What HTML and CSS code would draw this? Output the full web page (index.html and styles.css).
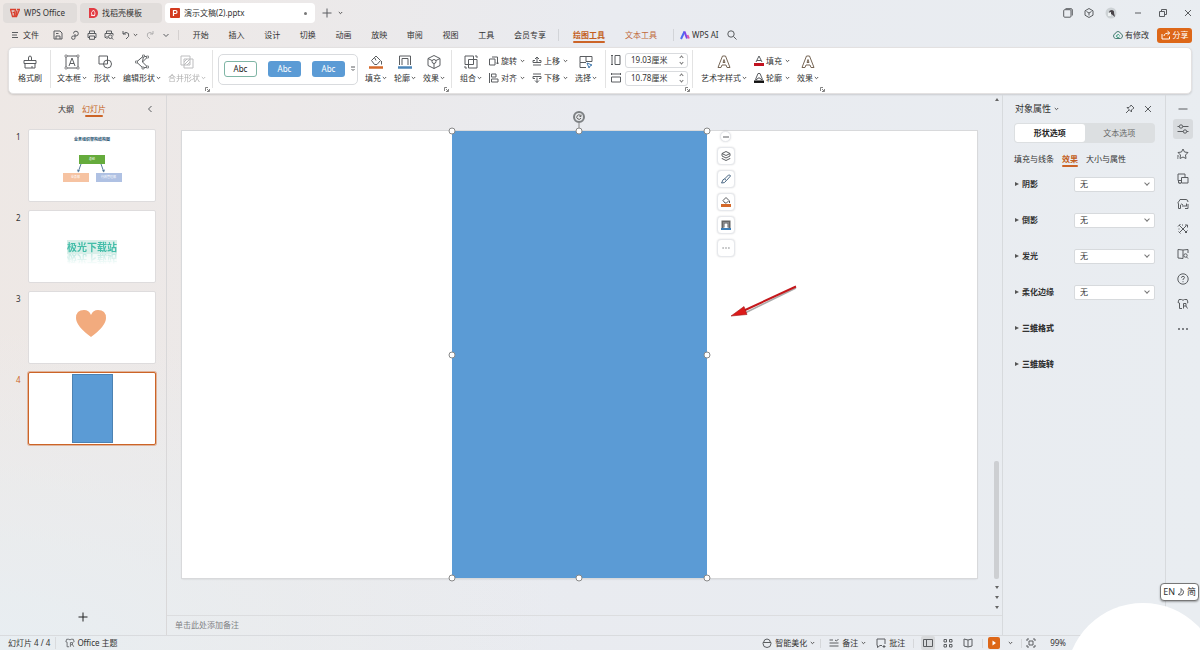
FILE: index.html
```html
<!DOCTYPE html>
<html lang="zh-CN">
<head>
<meta charset="utf-8">
<title>演示文稿(2).pptx - WPS Office</title>
<link rel="stylesheet" href="styles.css">
</head>
<body>
<svg class="defs" aria-hidden="true">
  <symbol id="caret" viewBox="0 0 5 4"><path d="M.8 1l1.700 1.700L4.200 1" fill="none" stroke="currentColor"/></symbol>
  <symbol id="launch" viewBox="0 0 5 5"><path d="M.5 4V.5H3M2 2l2 2M4.500 2v2.500H2" fill="none" stroke="currentColor" stroke-width=".8"/></symbol>
  <symbol id="shirt" viewBox="0 0 12 12"><path d="M5 10.500H2.500V5L1 4.500 2 1.500h2.500q1.500 1.500 3 0H10L11 4.500l-1 .5M6.500 5.500h2.500v2.500H6.500zM6.500 8v2.500M9 8l1.500 2.500"/></symbol>
</svg>

<header class="titlebar">
  <nav class="doc-tabs">
    <button class="doc-tab"><svg class="i10" viewBox="0 0 10 10"><path d="M.5 1.500h5L4 8.500H2.500zM2.500 4.500h3M5.500 8.500L7 2.500M4 8.500h2.500l3-7H7" fill="none" stroke="#d9402f" stroke-width="1.300"/></svg>WPS Office</button>
    <button class="doc-tab tab-mid"><svg class="i10" viewBox="0 0 10 10"><path d="M1 0h5q4 1 4 5t-4 5H1z" fill="#e23c44" stroke="none"/><path d="M5.500 2q-3 3-2 4.500 2 2 3.500 0Q7.500 5 5.500 2zM3 7.500h4" stroke="#fff" fill="none" stroke-width=".8"/></svg>找稻壳模板</button>
    <button class="doc-tab tab-open"><svg class="i10" viewBox="0 0 10 10"><rect width="10" height="10" rx="1" fill="#d33b20" stroke="none"/><path d="M3.500 8V2.500h2q1.500 0 1.500 1.500T5.500 5.500h-2" stroke="#fff" fill="none" stroke-width="1.200"/></svg>演示文稿(2).pptx<i class="dot"></i></button>
  </nav>
  <button class="plain" aria-label="新建"><svg class="i10" viewBox="0 0 10 10"><path d="M5 .5v9M.5 5h9"/></svg></button>
  <button class="plain" aria-label="更多"><svg class="caret"><use href="#caret"/></svg></button>
  <div class="window-tools">
    <button class="plain" aria-label="窗口"><svg class="i10" viewBox="0 0 10 10"><rect x=".7" y="1.700" width="7.300" height="7.500" rx="1"/><path d="M2.500.7H8q1.300 0 1.300 1.300v5.500"/></svg></button>
    <button class="plain" aria-label="应用"><svg class="i10" viewBox="0 0 10 10"><path d="M5 .5l4 2.300v4.400L5 9.500 1 7.200V2.800zM2.500 3.500L5 5l2.500-1.500M5 5v2.500"/></svg></button>
    <button class="plain" aria-label="账户"><svg class="i12" viewBox="0 0 12 12"><circle cx="6" cy="6" r="5.500" fill="#cdd2d5" stroke="none"/><path d="M4 6q0-3 3-3 2.500.5 2 3L10 10 7 7.500" fill="#484348" stroke="none"/><path d="M3 6l3-1v4H3z" fill="#eef2f2" stroke="none"/></svg></button>
    <button class="plain win" aria-label="最小化"><svg class="i8" viewBox="0 0 8 8"><path d="M1 4h6"/></svg></button>
    <button class="plain win" aria-label="还原"><svg class="i8" viewBox="0 0 8 8"><path d="M.5 2.500h5v5h-5zM2.500 2.500v-2h5v5h-2"/></svg></button>
    <button class="plain win" aria-label="关闭"><svg class="i8" viewBox="0 0 8 8"><path d="M1 1l6 6M7 1L1 7"/></svg></button>
  </div>
</header>

<div class="menubar">
  <button class="plain file"><svg class="i8" viewBox="0 0 8 8"><path d="M1 1.500h6M1 4h5M1 6.500h6"/></svg>文件</button>
  <div class="quick">
    <button class="plain" aria-label="保存"><svg class="i10" viewBox="0 0 10 10"><path d="M1 1h6l2 2v6H1zM3 9V6h4v3M3 3.500h2.500"/></svg></button>
    <button class="plain" aria-label="输出"><svg class="i10" viewBox="0 0 10 10"><path d="M3.500 3.500A2.400 2.400 0 1 1 6 6H3.500A1.700 1.700 0 1 0 5 7.500V4"/></svg></button>
    <button class="plain" aria-label="打印"><svg class="i10" viewBox="0 0 10 10"><path d="M2.500 3.500V1h5v2.500M2.500 7.500H1v-4h8v4H7.500M2.500 6h5v3.300h-5z"/></svg></button>
    <button class="plain" aria-label="打印预览"><svg class="i10" viewBox="0 0 10 10"><path d="M2.500 3.500V1h5v2.500M2 7.500H1v-4h8v2M3 9V6"/><circle cx="6.300" cy="6.700" r="1.800"/><path d="M7.700 8l1.500 1.500"/></svg></button>
    <button class="plain" aria-label="撤销"><svg class="i10" viewBox="0 0 10 10"><path d="M2 1v3h3M2 4q3-3 5.500-.5Q9 6.500 5 9"/></svg><svg class="caret"><use href="#caret"/></svg></button>
    <button class="plain off" aria-label="重做"><svg class="i10" viewBox="0 0 10 10"><path d="M8 1v3H5M8 4Q5 1 2.500 3.500 1 6.500 5 9"/></svg></button>
    <button class="plain" aria-label="自定义"><svg class="i8" viewBox="0 0 8 8"><path d="M1.500 3L4 5.500 6.500 3"/></svg></button>
  </div>
  <nav class="menu-tabs">
    <button>开始</button><button>插入</button><button>设计</button><button>切换</button><button>动画</button><button>放映</button><button>审阅</button><button>视图</button>
    <button>工具</button>
  </nav>
  <button class="plain member">会员专享</button>
  <nav class="context-tabs">
    <button class="plain current">绘图工具</button>
    <button class="plain">文本工具</button>
  </nav>
  <button class="plain ai"><svg class="i10" viewBox="0 0 10 10"><path d="M1 9l3.500-7.500" stroke="#4a6cf0" stroke-width="2"/><path d="M4.500 1.500L7 8.500" stroke="#7a45e8" stroke-width="2"/><path d="M7.500 5L9 8.500" stroke="#e052a8" stroke-width="1.800"/></svg>WPS AI</button>
  <button class="plain" aria-label="搜索"><svg class="i10" viewBox="0 0 10 10"><circle cx="4" cy="4" r="3.200"/><path d="M6.500 6.500l3 3"/></svg></button>
  <div class="menu-end">
    <button class="plain changes"><svg class="i10" viewBox="0 0 10 10"><path d="M2.500 8.500Q.5 8 .5 6t2-2.500Q3 1.500 5 1.500t2.500 2q2 .5 2 2.500t-2 2.500z" stroke="#4b7d74"/><path d="M6.500 5.500a1.500 1.500 0 1 0 0 1.200" stroke="#2b9a76"/></svg>有修改</button>
    <button class="share"><svg class="i10" viewBox="0 0 10 10"><path d="M1 4v5h7.500V6.500M3 6q0-3 5.500-3M6.500 1l2.200 2-2.200 2"/></svg>分享</button>
  </div>
</div>

<section class="ribbon" aria-label="绘图工具">
  <div class="group">
    <button class="tool"><svg class="i16" viewBox="0 0 16 16"><path d="M2 6.500h12v3H2zM3 9.500V14h10V9.500M6.500 6.500V4q0-2 1.500-2t1.500 2v2.500M10 14v-2"/></svg><span>格式刷</span></button>
  </div>
  <div class="group">
    <button class="tool"><svg class="i16" viewBox="0 0 16 16"><path d="M2 2h12v12H2zM5 12l3-8 3 8M6 9.500h4"/><path d="M1 1h2v2H1zM13 1h2v2h-2zM1 13h2v2H1zM13 13h2v2h-2z" fill="#fff" stroke-width=".6"/></svg><span>文本框<svg class="caret"><use href="#caret"/></svg></span></button>
    <button class="tool"><svg class="i16" viewBox="0 0 16 16"><path d="M6.500 10H2V2h8.500v4"/><circle cx="10.500" cy="10" r="4"/><path d="M10.500 6v4h-4"/></svg><span>形状<svg class="caret"><use href="#caret"/></svg></span></button>
    <button class="tool"><svg class="i16" viewBox="0 0 16 16"><path d="M9.500 2L2.500 8l6.500 6M13.500 3L8.500 8l5 5M9.500 2l-1 6M13.500 3l-4-1M9 14l4.500-1"/><path d="M1.500 7h2v2h-2zM8.500 1h2v2h-2zM12.500 2h2v2h-2zM12.500 12h2v2h-2zM8 13h2v2H8z" fill="#fff" stroke-width=".7"/></svg><span>编辑形状<svg class="caret"><use href="#caret"/></svg></span></button>
    <button class="tool off" disabled><svg class="i16" viewBox="0 0 16 16"><path d="M2 2h9v9H2zM5 5h9v9H5zM5 8l3-3M5 11l6-6M8 11l3-3"/></svg><span>合并形状<svg class="caret"><use href="#caret"/></svg></span></button>
    <svg class="launch"><use href="#launch"/></svg>
  </div>
  <div class="group styles-group">
    <div class="gallery">
      <button class="swatch swatch-line">Abc</button><button class="swatch">Abc</button><button class="swatch">Abc</button>
      <button class="plain gallery-more" aria-label="更多样式"><svg class="i6" viewBox="0 0 6 6"><path d="M1 1h4M1.500 3L3 4.500 4.500 3"/></svg></button>
    </div>
    <button class="tool"><svg class="i16" viewBox="0 0 16 16"><path d="M3.500 6.500L8 2l4.500 4.500-3.500 4H6.500zM6.500 3.500l1.500 3M13.500 7v3.500"/><path d="M1 13.500h14" stroke="#d4692a" stroke-width="2.500"/></svg><span>填充<svg class="caret"><use href="#caret"/></svg></span></button>
    <button class="tool"><svg class="i16" viewBox="0 0 16 16"><path d="M2.500 11V2h11v9M5 11V4.500h6V11"/><path d="M1 13.500h14" stroke="#4d86b8" stroke-width="2.500"/></svg><span>轮廓<svg class="caret"><use href="#caret"/></svg></span></button>
    <button class="tool"><svg class="i16" viewBox="0 0 16 16"><path d="M8 1.500l6 3v7l-6 3-6-3v-7zM2 4.500l4 2M14 4.500l-4 2M8 9.500v5"/><circle cx="8" cy="7.500" r="2"/></svg><span>效果<svg class="caret"><use href="#caret"/></svg></span></button>
    <svg class="launch"><use href="#launch"/></svg>
  </div>
  <div class="group arrange-group">
    <button class="tool"><svg class="i16" viewBox="0 0 16 16"><path d="M2 2h8.500v8.500H2zM5.500 5.500H14V14H5.500zM12 2h2v2M2 12v2h2"/></svg><span>组合<svg class="caret"><use href="#caret"/></svg></span></button>
    <div class="stack">
      <button class="line-tool"><svg class="i10" viewBox="0 0 10 10"><path d="M.5 3h5.500v6H.5zM3 1h5.500v7M7 6.500L8.500 8 10 6.500"/></svg>旋转<svg class="caret"><use href="#caret"/></svg></button>
      <button class="line-tool"><svg class="i10" viewBox="0 0 10 10"><path d="M.5 0v10M2.500 1H7v3H2.500zM2.500 6H9v3H2.500z"/></svg>对齐<svg class="caret"><use href="#caret"/></svg></button>
    </div>
    <div class="stack">
      <button class="line-tool"><svg class="i10" viewBox="0 0 10 10"><path d="M5 6V1M3 3l2-2 2 2M3 4.500H1v2h8v-2H7M1 9h8"/></svg>上移<svg class="caret"><use href="#caret"/></svg></button>
      <button class="line-tool"><svg class="i10" viewBox="0 0 10 10"><path d="M1 1h8M3 5.500H1v-2h8v2H7M5 4.500v5M3 7.500l2 2 2-2"/></svg>下移<svg class="caret"><use href="#caret"/></svg></button>
    </div>
    <button class="tool"><svg class="i16" viewBox="0 0 16 16"><path d="M8 13.500H2v-5h6M2 8.500v-6h12v5H8v-5"/><path d="M9 9l5 2-2 1-1 2z" stroke="#447bb0"/></svg><span>选择<svg class="caret"><use href="#caret"/></svg></span></button>
  </div>
  <div class="group size-group">
    <div class="sizes">
      <label class="size"><svg class="i10" viewBox="0 0 10 10"><path d="M1 .5v9M0 .5h2M0 9.500h2M4 .5h5v9H4z"/></svg><span class="field"><input value="19.03厘米" aria-label="高度"><i class="step"></i></span></label>
      <label class="size"><svg class="i10" viewBox="0 0 10 10"><path d="M.5 1h9M.5 0v2M9.500 0v2M.5 4h9v5h-9z"/></svg><span class="field"><input value="10.78厘米" aria-label="宽度"><i class="step"></i></span></label>
    </div>
    <svg class="launch"><use href="#launch"/></svg>
  </div>
  <div class="group group-last">
    <button class="tool"><svg class="i16" viewBox="0 0 16 16"><path d="M2 13.500L6.500 2h3L14 13.500h-3L10 11H6l-1 2.500zM7 8.500l1-3 1 3z" stroke="#766554"/></svg><span>艺术字样式<svg class="caret"><use href="#caret"/></svg></span></button>
    <div class="stack">
      <button class="line-tool"><svg class="i10" viewBox="0 0 10 10"><path d="M2 6l3-6 3 6M3 4.500h4"/><path d="M0 8.500h10" stroke="#c1121f" stroke-width="3"/></svg>填充<svg class="caret"><use href="#caret"/></svg></button>
      <button class="line-tool"><svg class="i10" viewBox="0 0 10 10"><path d="M1.500 6.500L4 .5h2l2.500 6H7L6 5H4L3 6.500z"/><path d="M0 8.700h10" stroke="#111" stroke-width="2.500"/></svg>轮廓<svg class="caret"><use href="#caret"/></svg></button>
    </div>
    <button class="tool"><svg class="i16" viewBox="0 0 16 16"><path d="M2 13.500L6.500 2h3L14 13.500h-3L10 11H6l-1 2.500zM7 8.500l1-3 1 3z" stroke="#766554"/></svg><span>效果<svg class="caret"><use href="#caret"/></svg></span></button>
    <svg class="launch"><use href="#launch"/></svg>
  </div>
</section>

<main class="workspace">
  <aside class="slides">
    <div class="slides-head">
      <button class="plain">大纲</button><button class="plain current">幻灯片</button>
      <button class="plain collapse" aria-label="收起"><svg class="i8" viewBox="0 0 8 8"><path d="M5.500 1L2.500 4l3 3"/></svg></button>
    </div>
    <ol class="thumbs">
      <li><span class="num">1</span><div class="thumb chart">
        <b class="chart-title">业务组织架构结构图</b>
        <span class="node node-top">总经</span>
        <svg class="links" viewBox="0 0 30 9"><path d="M4 0L1.500 7M24 0l2.500 7" stroke="#54799b"/><path d="M0 5.500l1 3 2-2zM25 6.500l2 2 1-3z" fill="#54799b" stroke="none"/></svg>
        <div class="node-row"><span class="node node-a">业务部</span><span class="node node-b">行政管理部</span></div>
      </div></li>
      <li><span class="num">2</span><div class="thumb art"><b class="art-text">极光下载站</b></div></li>
      <li><span class="num">3</span><div class="thumb art"><svg class="heart" viewBox="0 0 30 27"><path d="M15 27Q0 16 0 8 0 0 8 0q5 0 7 5 2-5 7-5 8 0 8 8 0 8-15 19z"/></svg></div></li>
      <li class="picked"><span class="num">4</span><div class="thumb"><div class="mini"></div></div></li>
    </ol>
    <button class="plain add" aria-label="新建幻灯片"><svg class="i10" viewBox="0 0 10 10"><path d="M5 .5v9M.5 5h9"/></svg></button>
  </aside>

  <section class="editor">
    <div class="stage">
      <div class="slide">
        <div class="shape">
          <svg class="rotate" viewBox="0 0 12 20"><path d="M6 12v8" stroke="#888"/><circle cx="6" cy="6" r="5" fill="#e4e6e9" stroke="#7d8083" stroke-width="2"/><path d="M7.500 4.500A2.200 2.200 0 1 0 8 7M8 3.500v2H6.500" stroke="#666"/></svg>
          <i class="handle l t"></i><i class="handle c t"></i><i class="handle r t"></i>
          <i class="handle l m"></i><i class="handle r m"></i>
          <i class="handle l b"></i><i class="handle c b"></i><i class="handle r b"></i>
          <div class="float-tools">
            <button class="float-min" aria-label="收起"><svg class="i8" viewBox="0 0 8 8"><path d="M1 4h6"/></svg></button>
            <button aria-label="图层"><svg class="i10" viewBox="0 0 10 10"><path d="M5 .5l4 2-4 2-4-2zM1 4.500v.5l4 2 4-2v-.5M1 7v.5l4 2 4-2V7M1 2.500v2M9 2.500v2"/></svg></button>
            <button aria-label="画笔"><svg class="i10" viewBox="0 0 10 10"><path d="M3.500 5l4-4q1.500-.5 2 1l-4 4.500zM3.500 5q-2 .5-2 2L.5 9q3 .5 5-2.500" stroke="#4c6a86"/></svg></button>
            <button aria-label="填充"><svg class="i10" viewBox="0 0 10 10"><path d="M2 3.500L5 .5l3 3-2.500 2.500H4zM8.500 4v2"/><path d="M0 8.500h10" stroke="#d4692a" stroke-width="3"/></svg></button>
            <button aria-label="轮廓"><svg class="i10" viewBox="0 0 10 10"><path d="M1.500 8V1.500h7V8" stroke-width="2" stroke="#666"/><path d="M3 7.500V3h4v4.500"/><path d="M0 9h10" stroke="#3f7fb7" stroke-width="2"/></svg></button>
            <button aria-label="更多"><svg class="i8" viewBox="0 0 8 8"><path d="M.5 4h1.200M3.400 4h1.200M6.300 4h1.200"/></svg></button>
          </div>
        </div>
        <svg class="arrow" viewBox="0 0 66 34"><path d="M65 3L14 28" stroke="#aaa" stroke-width="1.500"/><path d="M65 1.500L12 26" stroke="#c4171b" stroke-width="2"/><path d="M0 31L13 21.500l3 8z" fill="#dc1a1a" stroke="#9f1b1b" stroke-width=".6"/></svg>
      </div>
      <div class="scroll"><i class="up"></i><i class="bar"></i><i class="down"></i><i class="down"></i><i class="down"></i></div>
    </div>
    <div class="notes">单击此处添加备注</div>
  </section>

  <aside class="props">
    <div class="props-head">对象属性<svg class="caret"><use href="#caret"/></svg>
      <button class="plain pin" aria-label="固定"><svg class="i10" viewBox="0 0 10 10"><path d="M6 1l3 3-1 .5L6.500 6v2L2 3.500h2L5.500 2zM4 6L1 9"/></svg></button>
      <button class="plain" aria-label="关闭"><svg class="i8" viewBox="0 0 8 8"><path d="M1 1l6 6M7 1L1 7"/></svg></button>
    </div>
    <div class="segment"><button class="seg-on">形状选项</button><button>文本选项</button></div>
    <div class="prop-tabs"><button class="plain">填充与线条</button><button class="plain current">效果</button><button class="plain">大小与属性</button></div>
    <div class="prop"><i></i><label for="p1">阴影</label><span class="pick"><select id="p1"><option>无</option></select></span></div>
    <div class="prop"><i></i><label for="p2">倒影</label><span class="pick"><select id="p2"><option>无</option></select></span></div>
    <div class="prop"><i></i><label for="p3">发光</label><span class="pick"><select id="p3"><option>无</option></select></span></div>
    <div class="prop"><i></i><label for="p4">柔化边缘</label><span class="pick"><select id="p4"><option>无</option></select></span></div>
    <div class="prop"><i></i><b>三维格式</b></div>
    <div class="prop"><i></i><b>三维旋转</b></div>
  </aside>

  <nav class="rail">
    <button class="rail-min" aria-label="收起"><svg class="i10" viewBox="0 0 10 10"><path d="M.5 5h9"/></svg></button>
    <button class="rail-on" aria-label="属性"><svg class="i12" viewBox="0 0 12 12"><circle cx="4" cy="3.500" r="1.700"/><circle cx="8" cy="8.500" r="1.700"/><path d="M.5 3.500h1.800M5.700 3.500h5.800M.5 8.500h5.800M9.700 8.500h1.800"/></svg></button>
    <button aria-label="动画"><svg class="i12" viewBox="0 0 12 12"><path d="M3 10.500l.5-3.500L1 4.500l3.500-.5L6 1l1.500 3 3.500.5L8.500 7l.5 3.500L6 9zM0 8h2M0 10h1.500"/></svg></button>
    <button aria-label="切换"><svg class="i12" viewBox="0 0 12 12"><path d="M4 7.500H1V1h7v3M4.500 4.500H11V10H4.500zM2 9.500l1.500 1.500M1.500 7.500V10H4"/></svg></button>
    <button aria-label="图片"><svg class="i12" viewBox="0 0 12 12"><path d="M3.500 10.500h-2V6Q0 4 2 3.500L3 1.500h6q2 0 2 2.500M3.500 10.500V7q1-2 2.500 0v2M11 6v4.500H8M8 7v2M9.500 5.500v3"/></svg></button>
    <button aria-label="工具"><svg class="i12" viewBox="0 0 12 12"><path d="M2 10l7.500-7.500M2 2l8 8M8 2h2.500v2.500M1 3.500L3.500 1M8 10l2.500-2.500M1.500 8.500l2 2M5 2h1M1.500 6h1"/></svg></button>
    <button aria-label="资料"><svg class="i12" viewBox="0 0 12 12"><path d="M6 10.500L1 10V1.500L6 2l5-.5V5M6 2v8.500M11 10.500L9.500 9"/><circle cx="8.500" cy="7.500" r="1.700"/></svg></button>
    <button aria-label="帮助"><svg class="i12" viewBox="0 0 12 12"><circle cx="6" cy="6" r="5.200"/><path d="M4.500 4.800Q4.500 3.300 6 3.300t1.500 1.300Q7.500 5.500 6 6.200v.8M6 8.200v1"/></svg></button>
    <button aria-label="皮肤"><svg class="i12"><use href="#shirt"/></svg></button>
    <button aria-label="更多"><svg class="i12" viewBox="0 0 12 12"><path d="M1.500 5.500h1v1h-1zM5.500 5.500h1v1h-1zM9.500 5.500h1v1h-1z"/></svg></button>
  </nav>
</main>

<footer class="status">
  <span class="page-no">幻灯片 4 / 4</span>
  <button class="plain theme"><svg class="i10"><use href="#shirt"/></svg>Office 主题</button>
  <div class="status-end">
    <button class="plain smart"><svg class="i10" viewBox="0 0 10 10"><path d="M1 4.500h8v1a4 4 0 0 1-8 0zM1.500 4.500Q2 1 5 1t3.500 3.500"/></svg>智能美化<svg class="caret"><use href="#caret"/></svg></button>
    <i class="sep"></i>
    <button class="plain"><svg class="i10" viewBox="0 0 10 10"><path d="M.5 2H4M.5 5h9M.5 8h9M6 2l1.500 1L9.500 1"/></svg>备注<svg class="caret"><use href="#caret"/></svg></button>
    <button class="plain comment"><svg class="i10" viewBox="0 0 10 10"><path d="M6 7.500H4L1.500 9.500v-2H1V1h8v5M8 7v3M6.500 8.500h3"/></svg>批注</button>
    <i class="sep"></i>
    <button class="plain view view-on" aria-label="普通视图"><svg class="i10" viewBox="0 0 10 10"><path d="M.5 1.500h9v7h-9zM3.500 1.500v7"/></svg></button>
    <button class="plain view" aria-label="幻灯片浏览"><svg class="i10" viewBox="0 0 10 10"><path d="M1 1.500h2.500V4H1zM6.500 1.500H9V4H6.500zM1 6.500h2.500V9H1zM6.500 6.500H9V9H6.500z"/></svg></button>
    <button class="plain view" aria-label="阅读视图"><svg class="i10" viewBox="0 0 10 10"><path d="M5 2L1 1v7l4 1 4-1V1zM5 2v7"/></svg></button>
    <i class="sep"></i>
    <button class="play" aria-label="放映"><svg class="i6" viewBox="0 0 6 6"><path d="M1.500.5L5 3 1.500 5.500z" fill="#fff" stroke="none"/></svg></button>
    <button class="plain" aria-label="放映选项"><svg class="caret"><use href="#caret"/></svg></button>
    <i class="sep"></i>
    <button class="plain view fit" aria-label="适应窗口"><svg class="i10" viewBox="0 0 10 10"><path d="M1 3V1h2M7 1h2v2M9 7v2H7M3 9H1V7M3 3h4v4H3z"/></svg></button>
    <span>99%</span>
  </div>
</footer>
<svg class="bubble" viewBox="0 0 134 47"><circle cx="77" cy="77" r="77"/></svg>
<div class="ime">EN<svg class="i8" viewBox="0 0 8 8"><path d="M4 .5q4 2.500 2 5.500-2 2-5 .5 4-1 3-6z"/></svg>简</div>
</body>
</html>
```
FILE: styles.css
```css
*, *::before, *::after { box-sizing: border-box; }
body {
  margin: 0; height: 100vh; display: flex; flex-direction: column; position: relative; overflow: hidden;
  font: 8px/12px "Noto Sans", "Noto Sans CJK SC", sans-serif; color: #333;
  background: radial-gradient(ellipse at 0 100%, #e8eef2 0, #e8eef200 35%), linear-gradient(95deg, #eee8e5 0, #ece9e9 24%, #e9ebf0 48%, #e9edf1 100%);
}
button, input, select { font: inherit; color: inherit; border: 0; padding: 0; margin: 0; background: none; }
button { display: flex; align-items: center; justify-content: center; white-space: nowrap; }
svg { fill: none; stroke: #5a5d60; stroke-width: 1; flex: none; display: block; }
.defs { position: absolute; width: 0; height: 0; }
.i6 { width: 6px; height: 6px; }
.i8 { width: 8px; height: 8px; }
.i10 { width: 10px; height: 10px; }
.i12 { width: 12px; height: 12px; }
.i16 { width: 16px; height: 16px; }
.caret { width: 5px; height: 4px; color: #555; stroke: none; }
.off { opacity: .4; }
.current { color: #c35f22; font-weight: 600; position: relative; }
.current::after { content: ""; position: absolute; left: 0; right: 0; bottom: -2px; height: 2px; border-radius: 1px; background: #cc6427; }

.titlebar { display: flex; align-items: center; gap: 6px; height: 26px; padding: 0 8px 0 3px; flex: none; }
.doc-tabs { display: flex; gap: 3px; margin-right: 1px; }
.doc-tab { justify-content: flex-start; gap: 4px; width: 74px; height: 20px; padding: 0 7px; border-radius: 4px; background: #e1dddb; }
.tab-mid { width: 82px; padding: 0 8px; }
.tab-open { width: 150px; padding: 0 8px 0 5px; background: #fff; }
.dot { width: 3px; height: 3px; border-radius: 50%; background: #777; margin-left: auto; }
.window-tools { display: flex; align-items: center; gap: 11px; margin-left: auto; }
.win { margin-left: 6px; }

.menubar { display: flex; align-items: center; height: 18px; padding: 0 8px 0 11px; flex: none; }
.file { gap: 4px; }
.quick { display: flex; gap: 7px; margin-left: 14px; padding-right: 8px; border-right: 1px solid #d4d0cf; align-items: center; }
.quick .caret { margin-left: 2px; }
.menu-tabs { display: grid; grid-template-columns: repeat(9, 1fr); width: 321px; margin-left: 4px; }
.member { margin-left: 10px; padding-right: 12px; border-right: 1px solid #d2d4d8; }
.context-tabs { display: flex; gap: 20px; padding: 0 16px 0 14px; border-right: 1px solid #d2d4d8; color: #c0683a; }
.ai { gap: 2px; margin: 0 8px 0 6px; }
.menu-end { display: flex; gap: 8px; margin-left: auto; }
.changes { gap: 2px; }
.share { gap: 2px; width: 35px; height: 15px; border-radius: 3px; background: #dd6718; color: #fff; }
.share svg { stroke: #fff; }

.ribbon { display: flex; flex: none; height: 47px; margin: 3px 8px 0; padding: 2px 0 5px; border-radius: 5px; background: #fff; border: 1px solid #e3e1e1; box-shadow: 0 1px 2px #0002; }
.group { display: flex; align-items: center; gap: 7px; padding: 0 6px; border-right: 1px solid #e3e3e3; position: relative; }
.group:first-child { padding: 0 8px 0 9px; }
.group.group-last { border: 0; padding: 0 8px; }
.tool { flex-direction: column; gap: 2px; }
.tool span { display: flex; align-items: center; }
.tool .caret, .line-tool .caret { margin-left: 1px; }
.launch { position: absolute; right: 2px; bottom: -4px; width: 5px; height: 5px; color: #666; }
.group.styles-group { padding-left: 5px; }
.group.arrange-group { padding: 0 8px; }
.gallery { display: flex; align-items: center; gap: 11px; height: 31px; width: 140px; padding: 0 1px 0 5px; border: 1px solid #d9dbde; border-radius: 5px; }
.swatch { width: 33px; height: 16px; border-radius: 3px; background: #5b9bd5; color: #fff; }
.swatch-line { background: #fff; color: #222; border: 1px solid #7fb5a5; }
.gallery-more { margin-left: -6px; }
.stack { display: flex; flex-direction: column; gap: 5px; }
.line-tool { gap: 2px; }
.group.size-group { padding: 0 4px 0 5px; }
.sizes { display: flex; flex-direction: column; gap: 3px; }
.size { display: flex; align-items: center; gap: 4px; }
.field { display: flex; width: 63px; height: 15px; padding: 0 4px 0 5px; border: 1px solid #d9dbde; border-radius: 3px; }
.field input { min-width: 0; flex: 1; outline: 0; }
.step { display: flex; flex-direction: column; justify-content: space-evenly; }
.step::before, .step::after { content: ""; width: 3px; height: 3px; border: solid #777; border-width: 1px 0 0 1px; transform: rotate(45deg); }
.step::after { transform: rotate(225deg); }

.workspace { display: flex; flex: 1; min-height: 0; margin-top: 1px; }
.slides { width: 167px; flex: none; display: flex; flex-direction: column; border-right: 1px solid #d9d8d9; }
.slides-head { display: flex; gap: 8px; padding: 8px 12px 0 58px; }
.collapse { margin-left: auto; }
.slides-head .current { font-weight: 400; }
.slides-head .current::after { left: 3px; right: 3px; }
.thumbs { list-style: none; margin: 14px 10px 0 16px; padding: 0; display: grid; gap: 8px; }
.thumbs li { display: flex; gap: 7px; }
.num { width: 5px; font-size: 8px; line-height: 16px; }
.thumb { flex: 1; height: 73px; display: flex; flex-direction: column; align-items: center; background: #fff; border: 1px solid #dedcdd; border-radius: 2px; overflow: hidden; }
.picked .num { color: #cc6427; }
.picked .thumb { border-color: #cc6427; box-shadow: 0 0 0 1px #cc642766; border-radius: 2px; }
.chart-title { font-size: 4px; line-height: 6px; margin-top: 7px; color: #275570; }
.node { width: 26px; height: 9px; font-size: 3px; line-height: 9px; text-align: center; color: #fff; }
.node-top { background: #65ab3c; margin-top: 12px; }
.links { width: 30px; height: 9px; }
.node-row { display: flex; gap: 7px; }
.node-a { background: #f6c3a2; }
.node-b { background: #afc1e3; }
.art { justify-content: center; }
.art-text { font-size: 10px; line-height: 14px; font-weight: 700; color: #43bda9; background: #d9efe9; -webkit-box-reflect: below -2px linear-gradient(transparent 10%, #0006); }
.heart { width: 30px; height: 27px; fill: #f2ab7e; stroke: none; margin: 0 3px 8px 0; }
.mini { width: 41px; flex: 1; margin: 1px 0; background: #5b9bd5; border: 1px solid #4c82b3; }
.add { margin: auto auto 13px; align-self: center; }
.add svg { stroke: #222; }

.editor { flex: 1; min-width: 0; display: flex; flex-direction: column; }
.stage { flex: 1; display: flex; padding: 0 2px 2px 15px; }
.slide { flex: 1; display: flex; justify-content: center; margin: 36px 16px 35px 0; position: relative; background: #fff; outline: 1px solid #d8d9db; box-shadow: 0 1px 2px #0002; }
.shape { width: 32%; background: #5b9bd5; position: relative; }
.handle { position: absolute; width: 7px; height: 7px; border-radius: 50%; background: #fff; border: 1px solid #888; transform: translate(-50%, -50%); }
.l { left: 0; } .c { left: 50%; } .r { left: 100%; }
.t { top: 0; } .m { top: 50%; } .b { top: 100%; }
.rotate { position: absolute; left: 50%; bottom: 100%; width: 12px; height: 20px; transform: translateX(-50%); }
.float-tools { position: absolute; left: 100%; top: 0; margin-left: 10px; display: grid; gap: 5px; justify-items: center; }
.float-tools button { width: 18px; height: 18px; background: #fff; border: 1px solid #e6e8ec; border-radius: 4px; box-shadow: 0 0 2px #0002; }
.float-tools .float-min { width: 11px; height: 11px; border-radius: 50%; }
.arrow { position: absolute; left: 69%; top: 35%; width: 66px; height: 34px; margin-top: -2px; }
.scroll { width: 7px; display: flex; flex-direction: column; align-items: center; gap: 7px; padding: 3px 0 4px; }
.up, .down { border: 2px solid transparent; border-top: 0; border-bottom: 3px solid #666; }
.down { border-top: 3px solid #666; border-bottom: 0; }
.bar { width: 5px; height: 118px; margin-top: auto; background: #cdcfd2; border-radius: 2px; }
.notes { height: 20px; padding: 3px 8px; border-top: 1px solid #dcdddf; color: #808184; }

.props { width: 164px; flex: none; padding: 8px 10px 0 11px; border-left: 1px solid #d7dadd; border-right: 1px solid #d7dadd; }
.props-head { display: flex; align-items: center; font-size: 9px; gap: 3px; padding: 0 3px 0 1px; }
.props-head .pin { margin: 0 6px 0 auto; }
.segment { display: grid; grid-template-columns: 1fr 1fr; height: 20px; margin-top: 8px; padding: 1px; background: #dcdfe1; border-radius: 4px; }
.segment button { color: #666; border-radius: 3px; }
.segment .seg-on { background: #fff; color: #222; font-weight: 600; }
.prop-tabs { display: flex; gap: 8px; margin: 10px 0 1px; }
.prop { display: flex; align-items: center; height: 36px; font-weight: 700; margin-left: 1px; }
.prop i { border: 2px solid transparent; border-left: 4px solid #555; border-right: 0; margin-right: 3px; }
.pick { width: 81px; height: 15px; margin-left: auto; display: flex; align-items: center; padding-right: 5px; background: #fff; border: 1px solid #d7dadd; border-radius: 2px; font-weight: 400; }
.pick select { flex: 1; appearance: none; padding-left: 5px; outline: 0; }
.pick::after { content: ""; width: 4px; height: 4px; border: solid #777; border-width: 0 1px 1px 0; transform: translateY(-1px) rotate(45deg); }

.rail { width: 34px; flex: none; display: flex; flex-direction: column; align-items: center; gap: 5px; padding-top: 9px; }
.rail button { width: 20px; height: 20px; border-radius: 3px; }
.rail .rail-min { height: 10px; }
.rail .rail-on { background: #d8dbde; }

.status { display: flex; align-items: center; height: 15px; flex: none; padding: 0 134px 0 8px; border-top: 1px solid #d9dbde; }
.theme { gap: 2px; margin-left: 5px; padding-left: 9px; border-left: 1px solid #d9dbde; }
.status-end { display: flex; align-items: center; gap: 8px; margin-left: auto; }
.status-end button { gap: 3px; }
.status-end .smart { margin-right: -3px; }
.sep { width: 1px; height: 9px; background: #d5d7da; }
.comment { margin-left: 2px; }
.status-end .view { width: 14px; height: 14px; margin: 0 -1px; }
.status-end .fit { margin: 0 4px 0 -6px; }
.view-on { background: #d8dadc; border-radius: 2px; }
.play { width: 12px; height: 12px; margin: 0 0 0 -3px; border-radius: 2px; background: #dd6718; }

.bubble { position: absolute; right: 0; bottom: 0; width: 134px; height: 47px; fill: #fff; stroke: none; }
.ime { position: absolute; right: 1px; bottom: 49px; display: flex; align-items: center; gap: 2px; height: 18px; padding: 0 2px; font-size: 9px; background: #fff; border: 1px solid #777; border-radius: 4px; box-shadow: 0 1px 2px #0005; }
```
